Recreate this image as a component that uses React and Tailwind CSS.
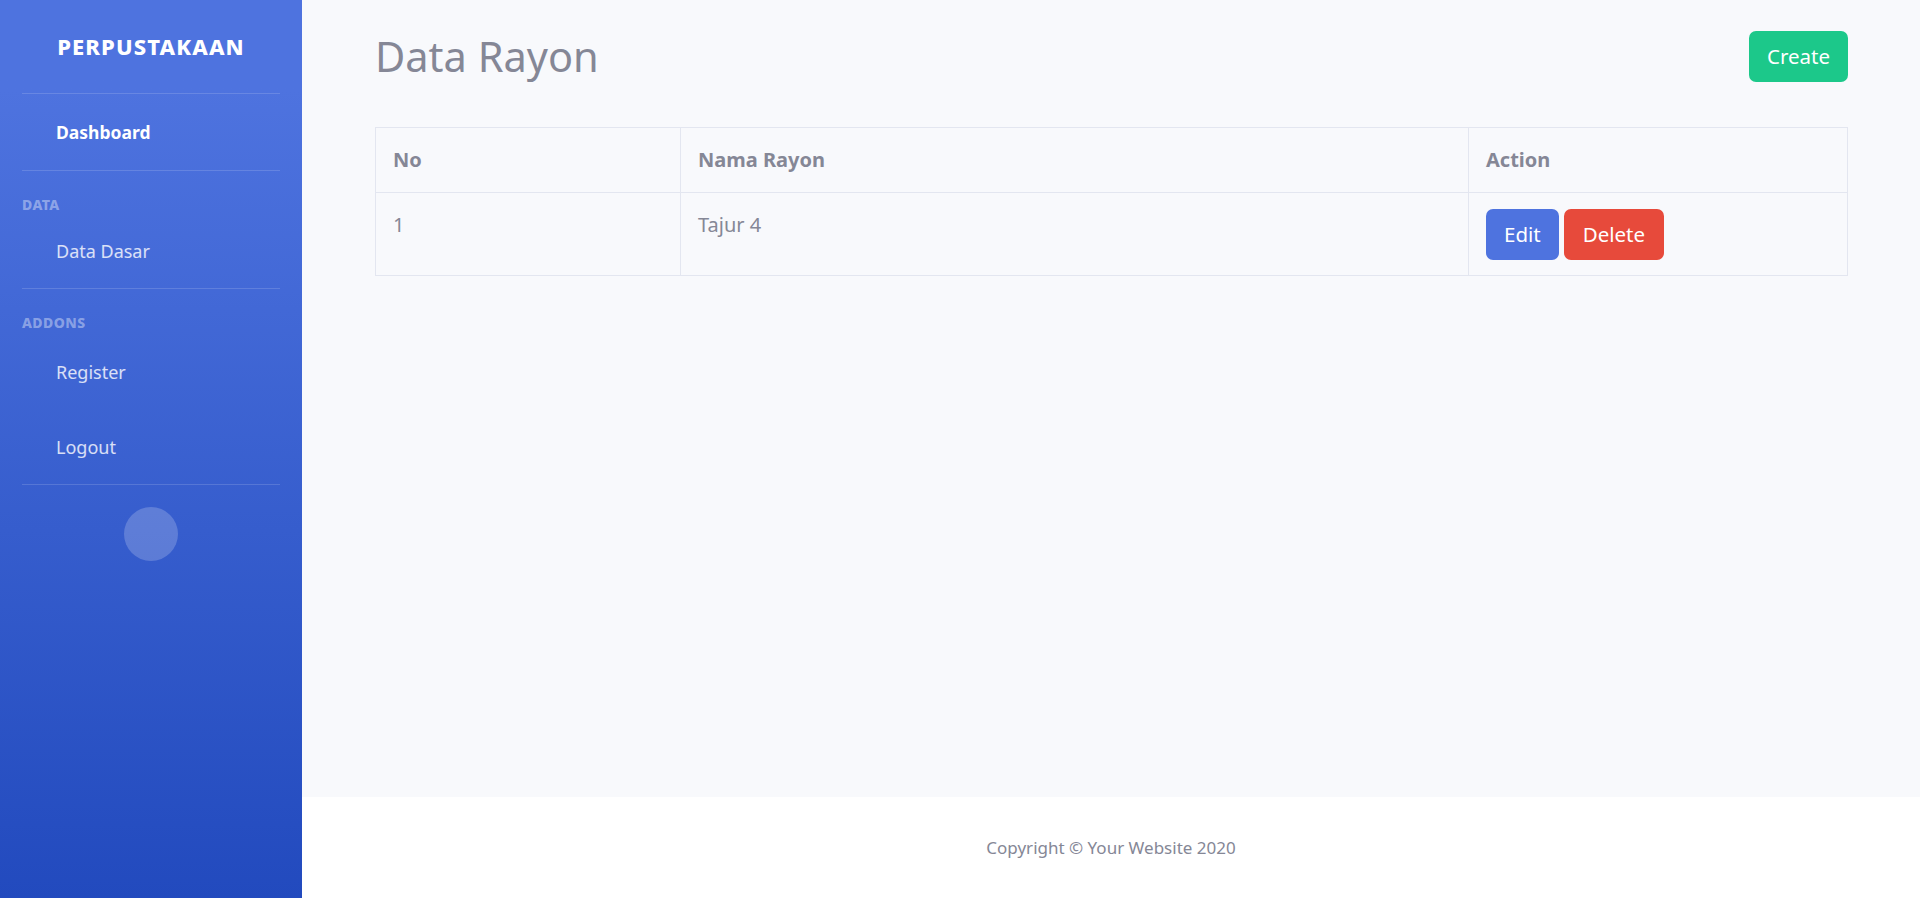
import React from 'react';

const sans = { fontFamily: "'Noto Sans', 'Open Sans', sans-serif" };

const Divider = () => <div className="mx-[22px] border-t border-white/15" />;

const Heading = ({ children }) => (
  <div className="mt-[17px] h-[32px] flex items-center pl-[22px] text-[14px] font-extrabold uppercase text-white/40 tracking-[0.03em]">
    {children}
  </div>
);

const Sidebar = () => (
  <aside className="w-[302px] shrink-0 bg-gradient-to-b from-[#4e73df] from-10% to-[#224abe]">
    <div className="h-[93px] flex items-center justify-center text-white text-[22px] font-extrabold uppercase tracking-[0.05em]">
      Perpustakaan
    </div>
    <Divider />
    <div className="h-[76px] flex items-center pl-[56px] text-white text-[17.5px] font-bold">Dashboard</div>
    <Divider />
    <Heading>Data</Heading>
    <div className="h-[62px] mb-[6px] flex items-center pl-[56px] text-white/80 text-[18px]">Data Dasar</div>
    <Divider />
    <Heading>Addons</Heading>
    <div className="h-[68px] flex items-center pl-[56px] text-white/80 text-[18px]">Register</div>
    <div className="mt-[7px] h-[68px] flex items-center pl-[56px] text-white/80 text-[18px]">Logout</div>
    <div className="mt-[3px]"><Divider /></div>
    <div className="flex justify-center mt-[22px]">
      <div className="w-[54px] h-[54px] rounded-full bg-white/20" />
    </div>
  </aside>
);

const rows = [{ no: 1, nama: 'Tajur 4' }];

export default function App() {
  return (
    <div className="flex h-[898px] w-full bg-[#f8f9fc]" style={sans}>
      <Sidebar />
      <div className="flex-1 flex flex-col">
        <main className="flex-1 pl-[73px] pr-[72px] pt-[31px]">
          <div className="flex items-center justify-between h-[51px]">
            <h1 className="text-[41.5px] font-normal text-[#858796] leading-none">Data Rayon</h1>
            <button className="h-[51px] px-[18px] rounded-[7px] bg-[#1cc88a] text-white text-[20.5px]">Create</button>
          </div>
          <table className="mt-[45px] w-full table-fixed border-collapse border border-[#e3e6f0] text-[#858796] text-[20px]">
            <colgroup>
              <col className="w-[305px]" />
              <col />
              <col className="w-[379px]" />
            </colgroup>
            <thead>
              <tr className="h-[65px]">
                <th className="border border-[#e3e6f0] px-[17px] text-left font-bold">No</th>
                <th className="border border-[#e3e6f0] px-[17px] text-left font-bold">Nama Rayon</th>
                <th className="border border-[#e3e6f0] px-[17px] text-left font-bold">Action</th>
              </tr>
            </thead>
            <tbody>
              {rows.map(r => (
                <tr key={r.no}>
                  <td className="border border-[#e3e6f0] px-[17px] pt-[17px] pb-[15px] align-top">{r.no}</td>
                  <td className="border border-[#e3e6f0] px-[17px] pt-[17px] pb-[15px] align-top">{r.nama}</td>
                  <td className="border border-[#e3e6f0] px-[17px] pt-[16px] pb-[15px] align-top whitespace-nowrap">
                    <div className="flex gap-[5px]">
                      <button className="h-[51px] px-[18px] rounded-[7px] bg-[#4e73df] text-white text-[20.5px]">Edit</button>
                      <button className="h-[51px] px-[19px] rounded-[7px] bg-[#e74a3b] text-white text-[20.5px]">Delete</button>
                    </div>
                  </td>
                </tr>
              ))}
            </tbody>
          </table>
        </main>
        <footer className="h-[101px] bg-white flex items-center justify-center text-[17px] text-[#858796]">
          Copyright © Your Website 2020
        </footer>
      </div>
    </div>
  );
}
